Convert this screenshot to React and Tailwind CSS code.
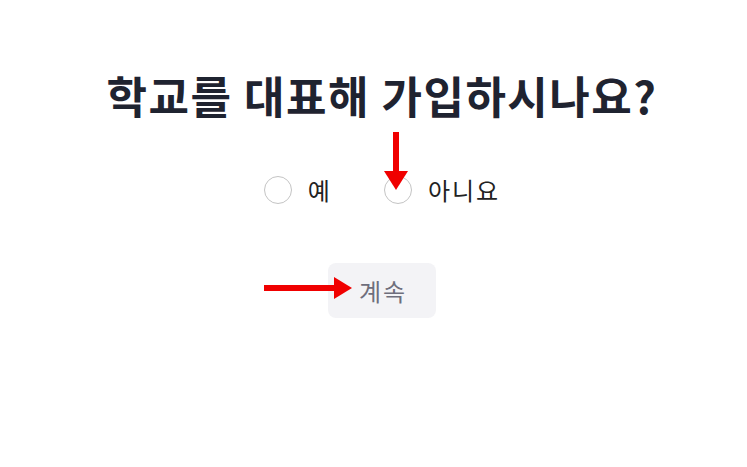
import React from 'react';

function Radio({ label, children }) {
  return (
    <label className="relative flex items-center gap-[16px]">
      <span className="block h-[28px] w-[28px] rounded-full border border-[#c4c4c4] bg-white" />
      <span className="text-[24px] leading-none tracking-[2px] text-[#222]">{label}</span>
      {children}
    </label>
  );
}

export default function App() {
  return (
    <div
      className="flex h-[467px] w-[747px] flex-col items-center bg-white pl-[17px]"
      style={{ fontFamily: '"Noto Sans CJK KR", "Noto Sans", sans-serif' }}
    >
      <h1 className="mt-[64px] text-[44px] font-bold leading-[62px] tracking-[1.5px] text-[#1f2330]">
        학교를 대표해 가입하시나요?
      </h1>

      <div className="mt-[50px] flex items-center gap-[52px]">
        <Radio label="예" />
        <Radio label="아니요">
          {/* annotation arrow pointing down */}
          <svg className="absolute left-0 top-[-44px]" width="24" height="60" viewBox="0 0 24 60">
            <rect x="9" y="0" width="6" height="42" fill="#f00000" />
            <polygon points="0,39 24,39 12,58" fill="#f00000" />
          </svg>
        </Radio>
      </div>

      <div className="relative mt-[59px]">
        {/* annotation arrow pointing right */}
        <svg className="absolute left-[-64px] top-[12px]" width="90" height="26" viewBox="0 0 90 26">
          <rect x="0" y="10" width="72" height="6" fill="#f00000" />
          <polygon points="70,2 88,13 70,24" fill="#f00000" />
        </svg>
        <button className="h-[55px] w-[108px] rounded-[8px] bg-[#f3f3f6] pl-[2px] text-[24px] tracking-[2px] text-[#6e6e7c]">
          계속
        </button>
      </div>
    </div>
  );
}
